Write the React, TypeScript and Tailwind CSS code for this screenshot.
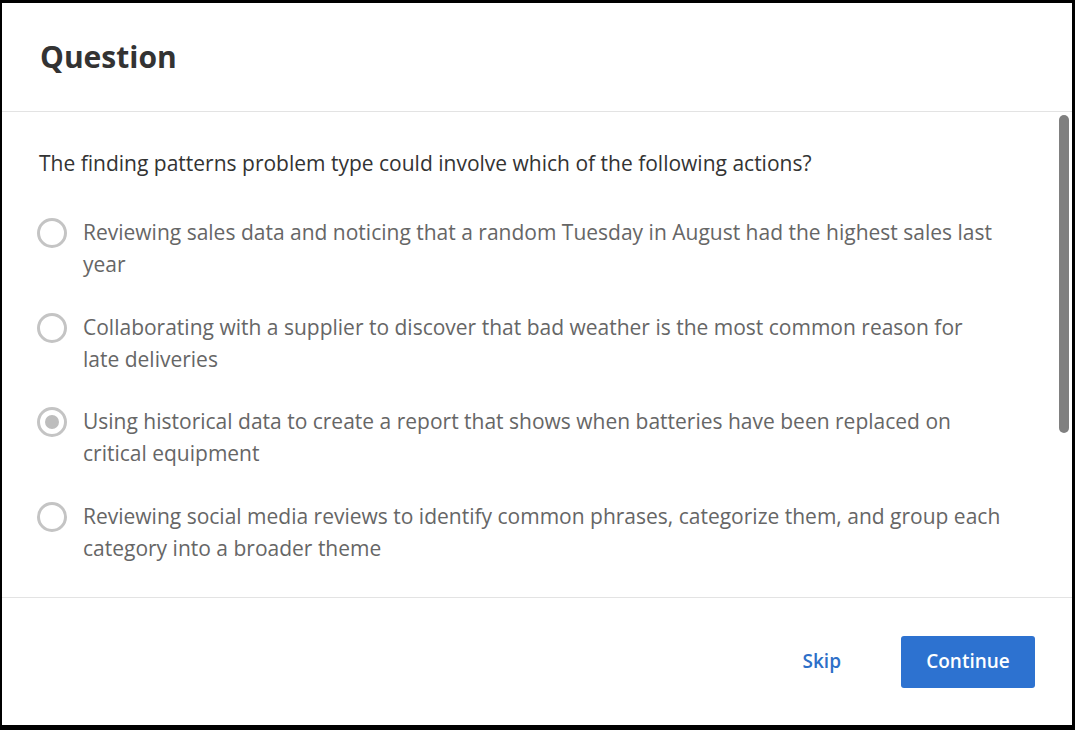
import { useState } from "react";

const options = [
  "Reviewing sales data and noticing that a random Tuesday in August had the highest sales last year",
  "Collaborating with a supplier to discover that bad weather is the most common reason for late deliveries",
  "Using historical data to create a report that shows when batteries have been replaced on critical equipment",
  "Reviewing social media reviews to identify common phrases, categorize them, and group each category into a broader theme",
];

function Radio({ checked }: { checked: boolean }) {
  return (
    <span className="w-[30px] h-[30px] shrink-0 rounded-full border-[3px] border-[#c4c4c4] flex items-center justify-center bg-white">
      {checked && <span className="w-[14px] h-[14px] rounded-full bg-[#bdbdbd]" />}
    </span>
  );
}

export default function App() {
  const [selected, setSelected] = useState(2);

  return (
    <div className="w-[1075px] h-[730px] bg-black pt-[3px] pl-[2px] pr-[3px] pb-[5px]" style={{ fontFamily: '"Open Sans", "Noto Sans", sans-serif' }}>
      <div className="w-full h-full bg-white flex flex-col">
        {/* Header */}
        <div className="h-[109px] shrink-0 flex items-center px-[38px] border-b border-[#e3e3e3]">
          <h2 className="text-[30px] font-bold text-[#333333] leading-none">Question</h2>
        </div>

        {/* Body */}
        <div className="relative flex-1 border-b border-[#e3e3e3] overflow-hidden">
          <div className="pl-[35px] pt-[37px]">
            <p className="pl-[2px] text-[21px] leading-[28px] text-[#333333]">
              The finding patterns problem type could involve which of the following actions?
            </p>
            <div className="flex flex-col gap-[30.5px] mt-[39px]">
              {options.map((label, i) => (
                <label key={i} className="flex items-start gap-[16px] cursor-pointer" onClick={() => setSelected(i)}>
                  <span className="pt-[2px]">
                    <Radio checked={selected === i} />
                  </span>
                  <span className="w-[920px] text-[21px] leading-[32px] text-[#666666]">{label}</span>
                </label>
              ))}
            </div>
          </div>

          {/* Scrollbar */}
          <div className="absolute right-[3px] top-[3px] w-[10px] h-[318px] rounded-full bg-[#808080]" />
        </div>

        {/* Footer */}
        <div className="h-[127px] shrink-0 flex items-center justify-end pr-[37px]">
          <button className="text-[19px] font-semibold text-[#2d6fc8] mr-[60px]">Skip</button>
          <button className="w-[134px] h-[52px] rounded-[3px] bg-[#2d72d0] text-white text-[19px] font-semibold">
            Continue
          </button>
        </div>
      </div>
    </div>
  );
}
